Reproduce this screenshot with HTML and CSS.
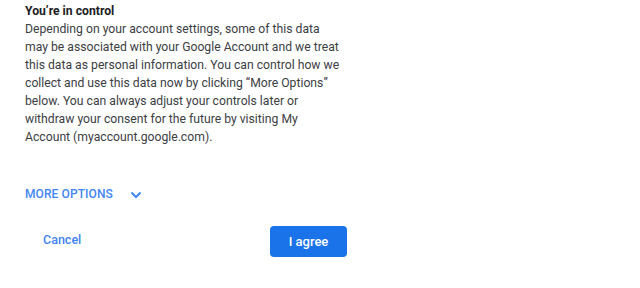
FILE: index.html
```html
<!DOCTYPE html>
<html lang="en">
<head>
  <meta charset="UTF-8" />
  <title>You're in control</title>
  <link rel="stylesheet" href="styles.css">
</head>
<body>
  <div class="consent">
    <h3 class="consent-title">You’re in control</h3>
    <p class="consent-text">Depending on your account settings, some of this data may be associated with your Google Account and we treat this data as personal information. You can control how we collect and use this data now by clicking “More Options” below. You can always adjust your controls later or withdraw your consent for the future by visiting My Account (myaccount.google.com).</p>

    <div class="more-options">
      <span>MORE OPTIONS</span>
      <svg class="chevron" width="12" height="8" viewBox="0 0 12 8">
        <path d="M1.5 1.5 L6 6 L10.5 1.5" fill="none" stroke="#4285f4" stroke-width="2"/>
      </svg>
    </div>

    <div class="actions">
      <button class="btn-cancel">Cancel</button>
      <button class="btn-agree">I agree</button>
    </div>
  </div>
</body>
</html>
```

FILE: styles.css
```css
body {
  margin: 0;
  background: #ffffff;
  font-family: Roboto, "Liberation Sans", Arial, sans-serif;
}

.consent {
  width: 319px;
  padding: 2px 0 0 25px;
}

.consent-title {
  margin: 0;
  font-size: 12.2px;
  font-weight: 700;
  line-height: 18px;
  color: #202124;
}

.consent-text {
  margin: 0;
  font-size: 12.2px;
  line-height: 18px;
  color: #3c4043;
}

.more-options {
  display: flex;
  align-items: center;
  gap: 17px;
  margin-top: 39px;
  height: 18px;
  color: #4285f4;
  font-size: 12px;
  font-weight: 500;
  letter-spacing: 0.1px;
}

.chevron {
  margin-top: 2px;
}

.actions {
  display: flex;
  align-items: center;
  justify-content: space-between;
  margin-top: 23px;
  width: 322px;
}

.btn-cancel {
  border: none;
  background: none;
  padding: 0 0 0 18px;
  font-family: inherit;
  font-size: 12.5px;
  font-weight: 500;
  color: #4285f4;
  margin-top: -4px;
}

.btn-agree {
  width: 77px;
  height: 31px;
  border: none;
  border-radius: 4px;
  background: #1a73e8;
  color: #ffffff;
  font-family: inherit;
  font-size: 13px;
  font-weight: 500;
}
```
